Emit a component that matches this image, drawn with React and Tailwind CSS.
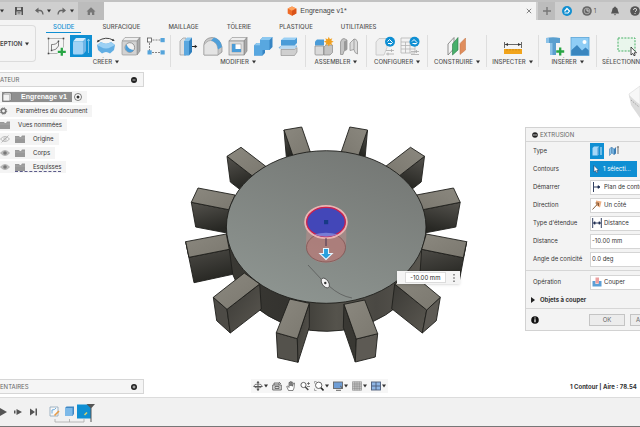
import React from "react";

const Caret = () => (
  <svg className="h-[4px] w-[4px] shrink-0" viewBox="0 0 4 4" aria-hidden="true">
    <path d="M0 0.6h4L2 3.6z" fill="#333" />
  </svg>
);

const Icon = ({ box = "0 0 20 20", className = "h-5 w-5", children }) => (
  <svg viewBox={box} className={"shrink-0 " + className} aria-hidden="true">
    {children}
  </svg>
);

/* ---------- toolbar icons ---------- */

const SketchIcon = () => (
  <Icon>
    <path d="M2.500 2.500h15v9M2.500 2.500v15h9" fill="none" stroke="#999" strokeWidth="0.700" />
    <path d="M5.500 14.500V8.500a7 6 0 0 0 7-3.500v5a8 7 0 0 1-7 4.500z" fill="none" stroke="#666" strokeWidth="0.800" />
    <g fill="#444">
      <rect x="1.700" y="1.700" width="1.600" height="1.600" />
      <rect x="16.700" y="1.700" width="1.600" height="1.600" />
      <rect x="1.700" y="16.700" width="1.600" height="1.600" />
      <rect x="4.800" y="13.800" width="1.400" height="1.400" />
      <rect x="11.800" y="4.500" width="1.400" height="1.400" />
    </g>
    <path d="M15.800 11.800v8M11.800 15.800h8" stroke="#27a544" strokeWidth="2.300" />
  </Icon>
);

const ExtrudeIcon = () => (
  <Icon>
    <path d="M2 5.500L5 2h10l-3 3.500z" fill="#d4ebfb" />
    <path d="M12 5.500L15 2v13l-3 3.500z" fill="#6fb5e6" />
    <rect x="2" y="5.500" width="10" height="13" rx="1" fill="#a0d2f5" />
    <path d="M17.500 17V3.500M16.300 5l1.200-2 1.200 2" fill="none" stroke="#bfe2f8" strokeWidth="0.600" />
  </Icon>
);

const RevolveIcon = () => (
  <Icon>
    <path d="M1 9l4-3q5 3.500 10 0l4 3-1 5-4 3.500q-4-3-8 0L2 14z" fill="#62aee3" />
    <path d="M1 9l4-3q5 3.500 10 0l4 3-4 2q-5 3-10 0z" fill="#9bd0f4" />
    <path d="M2 5q8-5 15-1" fill="none" stroke="#444" strokeWidth="1" />
    <path d="M0.800 6.500l1-2.800 2 1.600zM18.700 5l-3-.2 1.400-2z" fill="#333" />
  </Icon>
);

const HoleIcon = () => (
  <Icon>
    <path d="M1 5l3-3.500h15L16 5z" fill="#eee" stroke="#999" strokeWidth="0.700" />
    <path d="M16 5l3-3.500V15l-3 4z" fill="#aaa" stroke="#888" strokeWidth="0.700" />
    <rect x="1" y="5" width="15" height="14" rx="1" fill="#d2d2d2" stroke="#999" strokeWidth="0.700" />
    <circle cx="8.800" cy="11.500" r="4.800" fill="#f2f2f2" stroke="#777" strokeWidth="0.700" />
    <path d="M5.500 8.500q2 5 7.300 5.500a4.600 4.600 0 1 1-7.300-5.500z" fill="#4d9ed8" />
  </Icon>
);

const PatternIcon = () => (
  <Icon>
    <path d="M3.500 4h13M3.500 4v12.500M6 16.500h10" fill="none" stroke="#777" strokeWidth="0.900" strokeDasharray="2 1" />
    <rect x="1.500" y="2" width="4" height="4" fill="#fff" stroke="#555" strokeWidth="0.800" />
    <g fill="#55a4db">
      <rect x="14.500" y="2" width="4.200" height="4.200" />
      <rect x="1.500" y="14.300" width="4.200" height="4.200" />
      <rect x="14.500" y="14.300" width="4.200" height="4.200" />
    </g>
  </Icon>
);

const PressPullIcon = () => (
  <Icon>
    <path d="M2 5l3-3h3v17H2z" fill="#e0e0e0" stroke="#999" strokeWidth="0.700" />
    <path d="M6 5l3-3.500h5L11 5z" fill="#8cc8f0" />
    <path d="M6 5h5v14.500H6z" fill="#5aa7df" />
    <path d="M11 5l3-3.500V16l-3 3.500z" fill="#2f7fbd" />
    <path d="M14 10.500h4" stroke="#222" strokeWidth="1" />
    <path d="M16.800 8.800l2.500 1.700-2.500 1.700z" fill="#222" />
  </Icon>
);

const FilletIcon = () => (
  <Icon>
    <path d="M1 19V8q1-6 8-6.500Q17 2 19 11v5l-4 3z" fill="#c9c9c9" stroke="#888" strokeWidth="0.700" />
    <path d="M1 19V9q4-6 9-4 5 3 5 8v6z" fill="#e4e4e4" stroke="#999" strokeWidth="0.600" />
    <path d="M8 4.500l3-3Q18 3 19 11l-4 2.500Q14.500 6 8 4.500z" fill="#4f9fd9" />
  </Icon>
);

const ShellIcon = () => (
  <Icon>
    <path d="M1 5l3-3.500h15L16 5z" fill="#eee" stroke="#999" strokeWidth="0.700" />
    <path d="M16 5l3-3.500V15l-3 4z" fill="#aaa" stroke="#888" strokeWidth="0.700" />
    <rect x="1" y="5" width="15" height="14" fill="#dcdcdc" stroke="#888" strokeWidth="0.700" />
    <rect x="4" y="8" width="9" height="8" fill="#fff" stroke="#888" strokeWidth="0.500" />
    <path d="M4 8l3.500 0v5H13v3H4z" fill="#4b9cd8" />
  </Icon>
);

const CombineIcon = () => (
  <Icon>
    <path d="M7 4l3-3h9.500v10l-3 3H12v3l-2.500 2.500H1V9.500L3.500 7H7z" fill="#3785c4" />
    <path d="M7 4h9.500v10H9.500v5.500H1V9.500h6z" fill="#58a7e0" />
    <path d="M7 4l3-3h9.500l-3 3zM1 9.500L3.500 7H7v2.500z" fill="#8cc8f0" />
  </Icon>
);

const SplitIcon = () => (
  <Icon>
    <path d="M3 4l3-2.500h13L16.500 4z" fill="#9bd0f4" />
    <path d="M3 4h13.500L19 1.500V7l-2.500 2.500H3z" fill="#4b9cd8" />
    <path d="M1 11.500l2.500-1.500H19l-2.500 2H1z" fill="#eaf5fc" stroke="#4b9cd8" strokeWidth="0.600" />
    <path d="M3 13.500h13.500L19 11.500V16l-2.500 3.500H3z" fill="#cfcfcf" stroke="#888" strokeWidth="0.600" />
  </Icon>
);

const NewComponentIcon = () => (
  <Icon>
    <path d="M1 5.500l2-2h7v6H1z" fill="#4b9cd8" />
    <path d="M1 10h8.500v9H2q-1 0-1-1z" fill="#dadada" stroke="#888" strokeWidth="0.700" />
    <path d="M10 11l2-2h6.500v7.500L16 19h-6z" fill="#c4c4c4" stroke="#888" strokeWidth="0.700" />
    <path d="M14.800 0.800l1.100 2.400 2.400-1-1 2.400 2.400 1.100-2.400 1.100 1 2.400-2.400-1-1.100 2.400-1.100-2.400-2.400 1 1-2.400-2.400-1.100 2.400-1.100-1-2.400 2.400 1z" fill="#f0a020" />
  </Icon>
);

const JointIcon = () => (
  <Icon>
    <path d="M1.500 6Q2.500 2.500 5 2.500L8 4v9.500l-3 1.500-1 3.500H1.500z" fill="#c4c4c4" stroke="#888" strokeWidth="0.700" />
    <path d="M5 5.500L8 4v9.500L5 15z" fill="#999" />
    <path d="M18.500 6Q17.500 2.500 15 3l-4 4v7.500l4-1 1 3 2.500 1.500z" fill="#dcdcdc" stroke="#888" strokeWidth="0.700" />
    <path d="M15 3v10.500" stroke="#888" strokeWidth="0.700" />
  </Icon>
);

const ConfigureIcon = () => (
  <Icon>
    <path d="M1 19V6l3-3.500h8v9l-3 7.500z" fill="#ececec" stroke="#c4c4c4" strokeWidth="0.800" />
    <path d="M11 14.500h8M11 18h8M16.500 13v3M13 16.500v3" stroke="#aaa" strokeWidth="0.800" />
    <circle cx="15" cy="5.800" r="5" fill="#0f8fd3" />
    <path d="M12.500 5.500l2-2 3 3-2 2M13 7.500h4" fill="none" stroke="#fff" strokeWidth="1" />
  </Icon>
);

const ConfigTableIcon = () => (
  <Icon>
    <path d="M1 2h14v15H1zM1 6h14M1 9.500h14M1 13h14M5.500 6v11M10 6v11" fill="#f3f3f3" stroke="#b4b4b4" strokeWidth="0.800" />
    <path d="M11 15.500h8M11 18.500h8M16.500 14v3" stroke="#aaa" strokeWidth="0.800" />
    <circle cx="14.500" cy="5.800" r="5" fill="#0f8fd3" />
    <path d="M12 5.500l2-2 3 3-2 2M12.500 7.500h4" fill="none" stroke="#fff" strokeWidth="1" />
  </Icon>
);

const PlaneIcon = () => (
  <Icon>
    <path d="M1 8l6-6.500v11L1 19z" fill="#f4f4f4" stroke="#777" strokeWidth="0.800" />
    <path d="M5.500 8L11 1.500V14l-5.500 5z" fill="#48b06b" stroke="#2a7b45" strokeWidth="0.600" />
    <path d="M13 7.500L18.500 2v12L13 18.500z" fill="#e08d5c" stroke="#c07040" strokeWidth="0.500" />
  </Icon>
);

const MeasureIcon = () => (
  <Icon>
    <path d="M1.500 6v6M18.500 6v6M2 8.500h16" fill="none" stroke="#444" strokeWidth="0.800" />
    <path d="M2 8.500l3-1.500v3zM18 8.500l-3-1.500v3z" fill="#333" />
    <rect x="1" y="13" width="18" height="5" fill="#f1a41c" />
    <path d="M4 13v1.500M7 13v1.500M10 13v1.500M13 13v1.500M16 13v1.500" stroke="#a87210" strokeWidth="0.600" />
  </Icon>
);

const InsertIcon = () => (
  <Icon>
    <path d="M1 2q7-1.500 14 0v5H11v12H5V7H1z" fill="#5a9fcf" />
    <path d="M5 7h2.500v12H5zM1 2h3v5H1z" fill="#8bc2e8" />
    <path d="M15.200 11.500v8M11.200 15.500h8" stroke="#27a544" strokeWidth="2.300" />
  </Icon>
);

const ImageIcon = () => (
  <Icon>
    <rect x="1" y="1.500" width="18" height="18" fill="#8fcdf5" />
    <circle cx="14.500" cy="6" r="2" fill="#fff" />
    <path d="M1 14.500l6-5.500 5 5.500 3.500-3 3.500 3v5H1z" fill="#3a86bf" />
    <rect x="1" y="1.500" width="18" height="18" fill="none" stroke="#5aa5d8" strokeWidth="0.800" />
  </Icon>
);

const SelectIcon = () => (
  <Icon>
    <rect x="1" y="2" width="17" height="13" fill="#e9f6ec" stroke="#37a858" strokeWidth="0.900" strokeDasharray="2 1.200" />
    <path d="M14 11v8l1.800-1.600 1.200 2.400 1.200-.6-1.100-2.400h2.400z" fill="#fff" stroke="#222" strokeWidth="0.800" />
  </Icon>
);

const groups = [
  { label: "CRÉER", width: "w-[129px]", icons: [SketchIcon, ExtrudeIcon, RevolveIcon, HoleIcon, PatternIcon] },
  { label: "MODIFIER", width: "w-[135px]", icons: [PressPullIcon, FilletIcon, ShellIcon, CombineIcon, SplitIcon] },
  { label: "ASSEMBLER", width: "w-[61px]", icons: [NewComponentIcon, JointIcon] },
  { label: "CONFIGURER", width: "w-[61px]", icons: [ConfigureIcon, ConfigTableIcon] },
  { label: "CONSTRUIRE", width: "w-[59px]", icons: [PlaneIcon] },
  { label: "INSPECTER", width: "w-[52px]", icons: [MeasureIcon] },
  { label: "INSÉRER", width: "w-[58px]", icons: [InsertIcon, ImageIcon] },
  { label: "SÉLECTIONN", width: "flex-1 pl-[5px]", icons: [SelectIcon] },
];

const tabs = ["SOLIDE", "SURFACIQUE", "MAILLAGE", "TÔLERIE", "PLASTIQUE", "UTILITAIRES"];

function TitleBar() {
  return (
    <div className="flex h-5 items-stretch border-t-2 border-[#c2c2c2] bg-[#cfcfcf]">
      <div className="flex w-[78px] shrink-0 items-center justify-between pr-1">
        <Caret />
        <button aria-label="Enregistrer" className="ml-1">
          <Icon box="0 0 10 10" className="h-[10px] w-[10px]">
            <path d="M1 1h8v8H1z" fill="#555" />
            <path d="M3 1.500h4V4H3zM2.500 5.500h5V9h-5z" fill="#ccc" />
            <path d="M3.500 6.500h3M3.500 7.800h3" stroke="#555" strokeWidth="0.600" />
          </Icon>
        </button>
        <button aria-label="Annuler" className="ml-1 flex items-center gap-[3px]">
          <Icon box="0 0 10 10" className="h-[10px] w-[10px]">
            <path d="M2 4.500h4q2.500 0 3 4" fill="none" stroke="#666" strokeWidth="1.300" />
            <path d="M4.500 1.500v5.800L1 4.400z" fill="#666" />
          </Icon>
          <Caret />
        </button>
        <button aria-label="Rétablir" className="flex items-center gap-[3px]">
          <Icon box="0 0 10 10" className="h-[10px] w-[10px]">
            <path d="M8 4.500H4q-2.500 0-3 4" fill="none" stroke="#666" strokeWidth="1.300" />
            <path d="M5.500 1.500v5.800L9 4.400z" fill="#666" />
          </Icon>
          <Caret />
        </button>
      </div>
      <button aria-label="Accueil" className="flex w-[26px] shrink-0 items-center justify-center bg-[#bcbcbc]">
        <Icon box="0 0 10 10" className="h-[10px] w-[10px]">
          <path d="M0.500 5.500L5 1.200l4.500 4.300H8.300V9H6V6.500H4V9H1.700V5.500z" fill="#777" />
        </Icon>
      </button>
      <div className="flex min-w-0 flex-1 items-center bg-[#f3f3f3] pr-1">
        <div className="flex flex-1 items-center justify-center gap-[3px] pl-1 font-['Liberation_Sans',sans-serif] text-[7px] leading-[10px] text-[#444]">
          <Icon box="0 0 10 10" className="h-[10px] w-[10px]">
            <path d="M5 0.500l4.300 2v5L5 9.700.7 7.500v-5z" fill="#ef6a26" />
            <path d="M5 0.500l4.300 2L5 4.700.7 2.500z" fill="#ffa25c" />
            <path d="M5 4.700l4.300-2.200v5L5 9.700z" fill="#d9531a" />
          </Icon>
          <span>Engrenage v1*</span>
        </div>
        <button aria-label="Fermer">
          <Icon box="0 0 6 6" className="h-[6px] w-[6px]">
            <path d="M.8.8l4.400 4.400M5.200.8L.8 5.200" stroke="#666" strokeWidth="0.800" />
          </Icon>
        </button>
      </div>
      <div className="flex w-[104px] shrink-0 items-stretch">
        <button aria-label="Nouvel onglet" className="ml-[2px] flex w-[17px] items-center justify-center bg-[#bcbcbc]">
          <Icon box="0 0 8 8" className="h-2 w-2">
            <path d="M4 0v8M0 4h8" stroke="#777" strokeWidth="1.400" />
          </Icon>
        </button>
        <div className="flex flex-1 items-center justify-between pl-[7px]">
          <button aria-label="Extensions">
            <Icon box="0 0 10 10" className="h-[10px] w-[10px]">
              <circle cx="5" cy="5" r="5" fill="#118fd1" />
              <path d="M2.500 5.500l2.500-3 2.500 2.500L5.500 7.500M2.500 7h3" fill="none" stroke="#fff" strokeWidth="1.200" />
            </Icon>
          </button>
          <button className="flex items-center gap-[2px] font-['Inter',sans-serif] text-[6px] leading-[8px] text-[#555]">
            <Icon box="0 0 10 10" className="h-[10px] w-[10px]">
              <circle cx="5" cy="5" r="4.800" fill="#666" />
              <circle cx="5" cy="5" r="2.800" fill="none" stroke="#bbb" strokeWidth="0.800" />
              <path d="M5 3v2h2" fill="none" stroke="#ddd" strokeWidth="0.900" />
            </Icon>
            1
          </button>
          <button aria-label="Notifications" className="ml-1">
            <Icon box="0 0 10 10" className="h-[10px] w-[10px]">
              <path d="M5 .3l.8 1Q8 2 8 5l1 2.500H1L2 5q0-3 2.200-3.700zM3.800 8.200h2.400L5 9.600z" fill="#555" />
            </Icon>
          </button>
          <button aria-label="Aide">
            <Icon box="0 0 10 10" className="h-[10px] w-[10px]">
              <circle cx="5" cy="5" r="4.800" fill="#555" />
              <path d="M3.500 4q0-1.600 1.600-1.600T6.600 3.900Q6.600 4.800 5 5.800M5 7v1" fill="none" stroke="#ddd" strokeWidth="1" />
            </Icon>
          </button>
        </div>
      </div>
    </div>
  );
}

function Ribbon() {
  return (
    <div className="flex h-[50px] bg-[#f4f4f4]">
      <button className="mt-[5px] flex h-[37px] w-9 shrink-0 items-center gap-[3px] rounded-r-sm border border-l-0 border-[#dcdcdc] text-[6px] font-semibold leading-[8px] text-[#444]">
        EPTION <Caret />
      </button>
      <div className="ml-[6px] flex min-w-0 flex-1 flex-col">
        <nav className="ml-1 flex h-[13px] gap-[14px]">
          {tabs.map((t, i) => (
            <button
              key={t}
              className={
                "h-[13px] shrink-0 px-[7px] text-[6px] font-medium leading-[13px] " +
                (i === 0 ? "border-b border-[#0f8fd3] text-[#0f8fd3]" : "text-[#555]")
              }
            >
              {t}
            </button>
          ))}
        </nav>
        <div className="flex">
          {groups.map((g, gi) => (
            <div
              key={g.label}
              className={
                "mt-[2px] flex h-[32px] shrink-0 flex-col " +
                g.width +
                (gi < 7 ? " items-center border-r border-[#dedede]" : " items-start")
              }
            >
              <div className={"flex gap-[3px] " + (gi === 7 ? "pl-[14px]" : "")}>
                {g.icons.map((I, i) => (
                  <button
                    key={i}
                    aria-label={g.label + " " + (i + 1)}
                    className={
                      "flex h-[22px] w-[22px] items-center justify-center " +
                      (gi === 0 && i === 1 ? "bg-[#0f8fd3]" : "")
                    }
                  >
                    <I />
                  </button>
                ))}
              </div>
              <button className="mt-[1px] flex items-center gap-[3px] text-[6px] font-medium leading-[8px] text-[#555]">
                {g.label} {gi < 7 && <Caret />}
              </button>
            </div>
          ))}
        </div>
      </div>
    </div>
  );
}

/* ---------- browser ---------- */

const Eye = ({ off }) => (
  <Icon box="0 0 10 8" className="h-2 w-[10px]">
    <path d="M.5 4Q5-1 9.500 4 5 9 .5 4z" fill={off ? "none" : "#bbb"} stroke="#aaa" strokeWidth="0.800" />
    <circle cx="5" cy="4" r="1.800" fill={off ? "#ccc" : "#777"} />
    {off && <path d="M1.500 7.500l7-7" stroke="#aaa" strokeWidth="0.800" />}
  </Icon>
);

const Folder = () => (
  <Icon box="0 0 10 8" className="h-2 w-[10px]">
    <path d="M0 1h4l.8 1H6L7 .5h3V8H0z" fill="#999" />
    <path d="M0 3h10" stroke="#b5b5b5" strokeWidth="0.500" />
  </Icon>
);

const PanelBar = ({ title, plus }) => (
  <div className="flex h-[15px] w-36 items-center justify-between border border-l-0 border-[#d6d6d6] bg-[#f5f5f5] pr-[6px] text-[6px] leading-[8px] text-[#666]">
    <span>{title}</span>
    <button aria-label={title}>
      <Icon box="0 0 6 6" className="h-[6px] w-[6px]">
        <circle cx="3" cy="3" r="3" fill="#222" />
        <path d={plus ? "M1.500 3h3M3 1.500v3" : "M1.500 3h3"} stroke="#fff" strokeWidth="0.700" />
      </Icon>
    </button>
  </div>
);

const TreeRow = ({ children, pad = "pr-[5px]" }) => (
  <li className="flex h-[14px] items-center">
    <div className={"flex h-[12px] items-center bg-[#f4f4f4] " + pad}>{children}</div>
  </li>
);

function Browser() {
  return (
    <div>
      <PanelBar title="ATEUR" />
      <ul className="mt-[3px] text-[6px] leading-[8px] text-[#333]">
        <TreeRow>
          <span className="ml-[2px] flex h-[10px] w-[70px] items-center gap-[9px] bg-[#8f8f8f] font-['Liberation_Sans',sans-serif] text-[7px] font-bold text-white">
            <Icon box="0 0 10 10" className="h-[10px] w-[10px]">
              <path d="M1 2.500L2.500 1H9v6.500L7.500 9H1z" fill="#f2f2f2" stroke="#666" strokeWidth="0.600" />
              <path d="M1 2.500h6.500V9M7.500 2.500L9 1" fill="none" stroke="#999" strokeWidth="0.500" />
            </Icon>
            Engrenage v1
          </span>
          <Icon box="0 0 8 8" className="ml-[2px] h-2 w-2">
            <circle cx="4" cy="4" r="3.500" fill="#fff" stroke="#444" strokeWidth="0.700" />
            <circle cx="4" cy="4" r="1.500" fill="#333" />
          </Icon>
        </TreeRow>
        <TreeRow>
          <Icon box="0 0 8 8" className="mr-2 h-2 w-2">
            <circle cx="3.500" cy="4" r="2.200" fill="none" stroke="#777" strokeWidth="1.500" />
            <circle cx="3.500" cy="4" r="3.200" fill="none" stroke="#777" strokeWidth="1" strokeDasharray="1.300 1.200" />
          </Icon>
          Paramètres du document
        </TreeRow>
        <TreeRow>
          <span className="mr-2"><Folder /></span>
          Vues nommées
        </TreeRow>
        {["Origine", "Corps", "Esquisses"].map((n, i) => (
          <TreeRow key={n}>
            <Eye off={i === 0} />
            <span className={"ml-[5px] flex items-center gap-2 " + (i === 2 ? "border-b border-dashed border-[#5a5a8a]" : "")}>
              <Folder />
              {n}
            </span>
          </TreeRow>
        ))}
      </ul>
    </div>
  );
}

/* ---------- model ---------- */

const faces = {
  upper: [
    { d: "M284 130L293 154.700 286.300 156.700z", f: "url(#side)" },
    { d: "M284 130L301.700 127 310.300 152 293 156z", f: "url(#top)" },
    { d: "M227 156.300L252 175.700 239.300 189 230.300 182z", f: "url(#side)" },
    { d: "M227 156.300L241 147.300 266 166.500 252 175.700z", f: "url(#top)" },
    { d: "M191.300 202.300L228.700 209.700 227 233 195.700 227z", f: "url(#side)" },
    { d: "M191.300 202.300L198 188 235 195 228.700 209.700z", f: "url(#top)" },
  ],
  lower: [
    { d: "M185.700 241.700L189 257.300 229.300 249.300 232.700 274.300 194 282.700z", f: "url(#side)" },
    { d: "M185.700 241.700L226.300 234 229.300 249.300 189 257.300z", f: "url(#top)" },
    { d: "M213.300 297.300L227 309.300 230.300 333 216.700 320.700z", f: "#4d4b46" },
    { d: "M227 309.300L259.700 284 261.300 309 230.300 333z", f: "url(#side2)" },
    { d: "M213.300 297.300L244.300 273 259.700 284 227 309.300z", f: "url(#top)" },
    { d: "M276.300 332.700L297.300 338.700 298 362.300 277.700 357.700z", f: "#54524c" },
    { d: "M297.300 338.700L309.300 303.300V327L298 362.300z", f: "url(#side2)" },
    { d: "M276.300 332.700L289.700 299 309.300 303.300 297.300 338.700z", f: "url(#top)" },
    { d: "M344 304.300L356.300 339 355.300 362 343.300 327.300z", f: "#393833" },
    { d: "M356.300 339L377.700 333.700 375.300 357 355.300 362z", f: "#5d5a54" },
    { d: "M344 304.300L364.700 300 377.700 333.700 356.300 339z", f: "url(#top)" },
    { d: "M394.700 284L426.700 310 422.300 333 391.700 308.700z", f: "url(#side2)" },
    { d: "M426.700 310L440.300 297.300 436.300 320.700 422.300 333z", f: "#5d5a54" },
    { d: "M394.700 284L410 272 440.300 297.300 426.700 310z", f: "url(#top)" },
    { d: "M421.700 249.300L463.300 257.700 466.700 241.700 459 282.700 420 273z", f: "url(#side)" },
    { d: "M426.300 234L466.700 241.700 463.300 257.700 421.700 249.300z", f: "url(#top)" },
  ],
};

const Faces = ({ list }) =>
  list.map((p) => <path key={p.d} d={p.d} fill={p.f} stroke="#1f1f1c" strokeWidth="0.900" strokeLinejoin="round" />);

function Gear() {
  return (
    <svg viewBox="0 70 640 327" className="absolute inset-0 h-full w-full" role="img" aria-label="Engrenage">
      <defs>
        <linearGradient id="top" x1="0" y1="0" x2="1" y2="1">
          <stop offset="0" stopColor="#8b887f" />
          <stop offset="1" stopColor="#7b786f" />
        </linearGradient>
        <linearGradient id="side" x1="0" y1="0" x2="0.300" y2="1">
          <stop offset="0" stopColor="#55534e" />
          <stop offset="1" stopColor="#282824" />
        </linearGradient>
        <linearGradient id="side2" x1="0" y1="0" x2="1" y2="1">
          <stop offset="0" stopColor="#3b3a36" />
          <stop offset="1" stopColor="#5b5851" />
        </linearGradient>
        <linearGradient id="disc" x1="0.800" y1="0" x2="0.350" y2="1">
          <stop offset="0" stopColor="#747774" />
          <stop offset="1" stopColor="#8d9490" />
        </linearGradient>
        <linearGradient id="rim" x1="0" y1="0" x2="1" y2="0">
          <stop offset="0" stopColor="#3a3934" />
          <stop offset="0.300" stopColor="#34332f" />
          <stop offset="0.550" stopColor="#55534c" />
          <stop offset="0.750" stopColor="#4a4843" />
          <stop offset="1" stopColor="#5b5851" />
        </linearGradient>
      </defs>
      <Faces list={faces.upper} />
      <g transform="translate(651.500 0) scale(-1 1)">
        <Faces list={faces.upper} />
      </g>
      <path d="M226.300 227C227 248 229 264 232.700 274.300A97 78 0 0 0 420 273C423 262 426 248 426 227z" fill="url(#rim)" stroke="#1f1f1c" strokeWidth="0.900" />
      <ellipse cx="326.200" cy="227" rx="99.800" ry="76.300" fill="url(#disc)" stroke="#1f1f1c" strokeWidth="0.900" />
      <Faces list={faces.lower} />
      <path d="M307 222q-2 30 0 28 5 13 19 13t19-13q2-6 1-28z" fill="#c88e8c" fillOpacity="0.450" />
      <ellipse cx="326" cy="247.500" rx="19.500" ry="14.500" fill="#b07875" fillOpacity="0.650" stroke="#7d4c4a" strokeWidth="0.700" />
      <ellipse cx="326" cy="222" rx="20.700" ry="16" fill="#4347b8" stroke="#e9b3b1" strokeWidth="2.200" />
      <ellipse cx="326" cy="222" rx="19.300" ry="14.600" fill="none" stroke="#d21f48" strokeWidth="1.300" />
      <path d="M314 234.500q12-3.500 24 0-12 4.500-24 0z" fill="#8589dd" fillOpacity="0.800" />
      <rect x="324" y="220" width="4.200" height="4.200" fill="#173a86" />
      <path d="M326 238v8" stroke="#3c2c4c" strokeWidth="0.900" />
      <path d="M323.500 248.500h5v5h3.700l-6.200 6-6.200-6h3.700z" fill="#2aa0dd" stroke="#e9f6ff" strokeWidth="1.100" />
      <path d="M308 265l14 15M329 286q11 10 23 12" fill="none" stroke="#4a4a4a" strokeWidth="0.600" />
      <ellipse cx="325.300" cy="283" rx="3.200" ry="5.500" transform="rotate(-35 325.300 283)" fill="#f2f2f2" stroke="#444" strokeWidth="0.800" />
      <circle cx="325.300" cy="283" r="1.200" fill="#333" />
    </svg>
  );
}

/* ---------- extrusion dialog ---------- */

const fieldBox = "flex h-[15px] min-w-0 flex-1 items-center gap-[2px] overflow-hidden whitespace-nowrap border border-r-0 border-[#d5d5d5] bg-white pl-[1px]";

const Row = ({ label, id, children }) => (
  <div className="flex h-[18px] items-center">
    <label htmlFor={id} className="w-[57px] shrink-0 whitespace-nowrap">{label}</label>
    {children}
  </div>
);

const Glyph = ({ children }) => <Icon box="0 0 10 10" className="h-[10px] w-[10px]">{children}</Icon>;

const selects = [
  ["Démarrer", "start", "Plan de contour", <path key="a" d="M1.500 0v10M2 5h5M6 3.700L8 5 6 6.300z" fill="#1c2b50" stroke="#1c2b50" strokeWidth="0.900" />],
  ["Direction", "dir", "Un côté", <g key="b"><path d="M4 .5l5.500 1-1.500 6-4-2z" fill="#eeb083" /><path d="M0.500 9.500L6 3.500M3.500 3h3v3" fill="none" stroke="#7b5230" strokeWidth="0.900" /></g>],
  ["Type d'étendue", "extent", "Distance", <path key="c" d="M.7 0v10M9.300 0v10M1.500 5h7M3 3.700L1.500 5 3 6.300zM7 3.700L8.500 5 7 6.300z" fill="#1c2b50" stroke="#1c2b50" strokeWidth="0.900" />],
];

const SelectField = ({ id, value, glyph }) => (
  <span className={fieldBox}>
    <Glyph>{glyph}</Glyph>
    <select id={id} className="w-[60px] shrink-0 appearance-none bg-transparent outline-none">
      <option>{value}</option>
    </select>
  </span>
);

function ExtrudeDialog() {
  return (
    <form className="w-full border border-r-0 border-[#d2d2d2] bg-[#f3f3f3] text-[6px] leading-[8px] text-[#333]">
      <h2 className="flex h-[14px] items-center gap-[2px] border-b border-[#d6d6d6] pl-[6px] text-[#666]">
        <Icon box="0 0 6 6" className="h-[6px] w-[6px]">
          <circle cx="3" cy="3" r="2.800" fill="#222" />
          <path d="M1 3h4" stroke="#fff" strokeWidth="0.700" />
        </Icon>
        EXTRUSION
      </h2>
      <div className="border-b border-[#d6d6d6] pb-[2px] pl-[7px]">
        <Row label="Type" id="type">
          <button id="type" type="button" aria-label="Plein" className="flex h-[16px] w-[14px] items-center justify-center bg-[#0f8fd3]">
            <Glyph>
              <path d="M.5 2L2 .5h5v7.500L5.500 9.500h-5z" fill="#a6d8f8" />
              <path d="M5.500 2L7 .5V8L5.500 9.500z" fill="#4c9cd4" />
              <path d="M9 1v8" stroke="#e6f5ff" strokeWidth="0.900" />
            </Glyph>
          </button>
          <button type="button" aria-label="Fin" className="flex h-[16px] w-5 items-center justify-center">
            <Glyph>
              <path d="M.5 3l2-2v6.500l-2 2zM3 1.500L5 3v5.500L3 7z" fill="#8cc4ea" stroke="#2d6fa6" strokeWidth="0.500" />
              <path d="M5 3l2-2v6.500L5 9z" fill="#3a7db5" />
              <path d="M9 .5v7.500M8.200 1.500L9 .5l.8 1" stroke="#333" strokeWidth="0.700" fill="none" />
            </Glyph>
          </button>
        </Row>
        <Row label="Contours" id="profile">
          <button id="profile" type="button" className="flex h-[16px] w-[47px] items-center gap-[3px] bg-[#0f8fd3] pl-[3px] text-white">
            <Icon box="0 0 7 9" className="h-[9px] w-[7px]">
              <path d="M1 .5v6.500l1.500-1.300L3.700 8l1-.5-1-2.200h2z" fill="#fff" stroke="#235" strokeWidth="0.500" />
            </Icon>
            1 sélecti...
          </button>
        </Row>
        {selects.map(([label, id, value, glyph]) => (
          <Row key={id} label={label} id={id}>
            <SelectField id={id} value={value} glyph={glyph} />
          </Row>
        ))}
        <Row label="Distance" id="dist">
          <span className={fieldBox}><input id="dist" defaultValue="-10.00 mm" className="w-full bg-transparent outline-none" /></span>
        </Row>
        <Row label="Angle de conicité" id="taper">
          <span className={fieldBox}><input id="taper" defaultValue="0.0 deg" className="w-full bg-transparent outline-none" /></span>
        </Row>
      </div>
      <div className="border-b border-[#d6d6d6] pl-[7px] pt-[2px]">
        <Row label="Opération" id="op">
          <SelectField
            id="op"
            value="Couper"
            glyph={
              <g>
                <path d="M.5 4h3v3h3V4h3v5.500h-9z" fill="#5c9fd6" />
                <path d="M3.500 .5h3.500v6H3.500z" fill="#eba0a0" />
              </g>
            }
          />
        </Row>
        <button type="button" className="-ml-[2px] flex h-[17px] items-center gap-[5px] whitespace-nowrap font-bold">
          <Icon box="0 0 4 6" className="h-[6px] w-[4px]"><path d="M0 0l4 3-4 3z" fill="#222" /></Icon>
          Objets à couper
        </button>
      </div>
      <div className="flex h-[21px] items-center overflow-hidden pl-[5px]">
        <Icon box="0 0 8 8" className="h-2 w-2">
          <circle cx="4" cy="4" r="3.800" fill="#111" />
          <path d="M4 1.500v1M4 3.300v3" stroke="#fff" strokeWidth="1.200" />
        </Icon>
        <button type="button" className="ml-[50px] h-[12px] w-9 shrink-0 border border-[#c4c4c4] bg-[#ececec] text-[#666]">OK</button>
        <button type="button" className="ml-[5px] h-[12px] flex-1 border border-r-0 border-[#c4c4c4] bg-[#ececec] pl-[5px] text-left text-[#666]">A</button>
      </div>
    </form>
  );
}

const ViewCube = () => (
  <Icon box="0 0 12 36" className="h-9 w-3 self-end">
    <path d="M1 9L12 1v19L2 13z" fill="#f7f7f7" stroke="#ddd" strokeWidth="0.700" />
    <path d="M1 10l11 10v13L3 20z" fill="#dcdcdc" />
    <path d="M3 15l8 7" stroke="#aaa" strokeWidth="1" strokeDasharray="1.500 1" />
  </Icon>
);

/* ---------- navigation bar ---------- */

const navItems = [
  ["Orbite", true, <g key="o"><path d="M5 .5v9M.5 5.500h9" stroke="#555" strokeWidth="1" /><ellipse cx="5" cy="5" rx="4" ry="2" fill="none" stroke="#666" strokeWidth="0.800" /><path d="M3.500 2L5 0l1.500 2zM3.500 8L5 10l1.500-2z" fill="#555" /></g>],
  ["Regarder", false, <path key="l" d="M.7 4h8.600v5H.7zM2 4V2h5v2M3 5.500h4v2H3zM7 1l2 2" fill="#ddd" stroke="#555" strokeWidth="0.800" />],
  ["Panoramique", false, <path key="p" d="M2.500 9.500L.7 5.500l1-.5 1.300 1.500V1.500h1V5 .7h1.200V5 1h1.200v4.300L7.500 2h1L8 7 7 9.500z" fill="#fff" stroke="#555" strokeWidth="0.700" />],
  ["Zoom", false, <g key="z"><circle cx="3.500" cy="4" r="2.600" fill="#fff" stroke="#555" strokeWidth="0.900" /><path d="M5.300 6l3 3" stroke="#444" strokeWidth="1.400" /><path d="M7 2.500h3M8.500 1v3M7 5.500h3" stroke="#555" strokeWidth="0.700" /></g>],
  ["Ajuster", true, <g key="f"><path d="M.5 2.500v-2h2M.5 7.500v2h2" fill="none" stroke="#888" strokeWidth="0.700" /><circle cx="4.700" cy="4.300" r="3.200" fill="#fff" stroke="#555" strokeWidth="0.900" /><path d="M7 6.700l2.500 2.800" stroke="#222" strokeWidth="1.600" /></g>],
  ["Affichage", true, <g key="d"><rect x="0.500" y="1" width="9" height="6.500" fill="#6f9ed6" stroke="#666" strokeWidth="0.900" /><path d="M3 9.300h5M7 5q2 0 2 3" stroke="#666" strokeWidth="1" fill="none" /></g>],
  ["Grille", true, <path key="g" d="M.5.7h9v8.600h-9zM.5 3h9M.5 5.200h9M.5 7.300h9M2.800.7v8.600M5 .7v8.600M7.300.7v8.600" fill="#ccc" stroke="#777" strokeWidth="0.500" />],
  ["Fenêtres", true, <g key="w"><rect x="0.500" y="1" width="9" height="8" fill="#8fb6e4" stroke="#4c5c78" strokeWidth="0.900" /><path d="M5 1v8M.5 5h9" stroke="#4c5c78" strokeWidth="0.900" /></g>],
];

const NavBar = () => (
  <div className="flex h-[14px] items-center gap-[4px] bg-[#f6f6f6] px-[2px]">
    {navItems.map(([name, menu, art]) => (
      <button key={name} aria-label={name} className="flex items-center gap-[1px]">
        <Icon box="0 0 10 10" className="h-[10px] w-[10px]">{art}</Icon>
        {menu && <Caret />}
      </button>
    ))}
  </div>
);

function Timeline() {
  return (
    <div className="flex h-[30px] items-start border-b border-t border-b-[#777] border-t-[#dcdcdc] bg-[#f1f1f1] pt-[6px]">
      <div className="flex h-[15px] items-center gap-[7px]">
        <button aria-label="Lecture"><Icon box="0 0 7 8" className="h-2 w-[7px]"><path d="M0 0l7 4-7 4z" fill="#555" /></Icon></button>
        <button aria-label="Avancer"><Icon box="0 0 8 8" className="h-2 w-2"><path d="M2.500 1L8 4 2.500 7zM0 2.500h1.500v3H0z" fill="#555" /></Icon></button>
        <button aria-label="Fin" className="ml-[1px]"><Icon box="0 0 7 8" className="h-2 w-[7px]"><path d="M0 .5L5 4 0 7.500zM5.500.5H7v7H5.500z" fill="#555" /></Icon></button>
      </div>
      <Icon box="0 0 48 20" className="ml-[11px] h-5 w-12">
        <path d="M2 3h8v9H2z" fill="#f8f8f8" stroke="#8aa3b8" strokeWidth="0.800" />
        <path d="M4 9.500V6q3 0 4-2" fill="none" stroke="#5da3d8" strokeWidth="0.900" />
        <path d="M6.500 11.500L11 7" stroke="#e79a45" strokeWidth="1.600" />
        <path d="M17 4l1.500-1.500H26V10l-1.500 2H17z" fill="#3f87c4" />
        <path d="M17 4h7.500v8H17z" fill="#7db9e8" />
        <rect x="29" y="0.500" width="14" height="14" fill="#0f8fd3" />
        <path d="M36.500 11l2.500-2.500" stroke="#d9d26a" strokeWidth="1.600" />
        <path d="M38.500 0h8.500l-3.500 4v14h-1V4z" fill="#555" />
        <path d="M7 15v3h29v-3M21.500 15v3" fill="none" stroke="#aaa" strokeWidth="0.800" />
      </Icon>
    </div>
  );
}

export default function App() {
  return (
    <div className="flex h-screen flex-col overflow-hidden bg-white font-['Inter','Noto_Sans',sans-serif]">
      <TitleBar />
      <Ribbon />
      <main className="relative flex min-h-0 flex-1 bg-white">
        <Gear />
        <div className="absolute left-[62%] top-[61.500%] flex h-[13px] w-[63px] items-center justify-between bg-[#f4f4f4] pl-[8px] pr-[5px] shadow-sm">
          <input
            aria-label="Distance"
            defaultValue="-10.00 mm"
            className="h-[11px] w-[41px] border border-[#dcdcdc] bg-white text-center text-[6px] leading-[8px] text-[#222] outline-none"
          />
          <Icon box="0 0 2 8" className="h-2 w-[2px]">
            <path d="M.4 0h1.200v1.400H.4zM.4 3.300h1.200v1.400H.4zM.4 6.600h1.200V8H.4z" fill="#555" />
          </Icon>
        </div>
        <div className="relative flex w-36 shrink-0 flex-col justify-between pb-[3px] pt-[2px]">
          <Browser />
          <PanelBar title="ENTAIRES" plus />
        </div>
        <div className="relative flex flex-1 flex-col items-center justify-end pb-1 pr-[30px]">
          <NavBar />
        </div>
        <div className="relative flex w-[115px] shrink-0 flex-col pt-[15px]">
          <ViewCube />
          <div className="mt-[6px]"><ExtrudeDialog /></div>
          <p className="mt-auto whitespace-nowrap pb-[6px] pl-[45px] text-[6px] font-bold leading-[8px] text-[#333]">
            1 Contour | Aire : 78.54
          </p>
        </div>
      </main>
      <Timeline />
    </div>
  );
}
